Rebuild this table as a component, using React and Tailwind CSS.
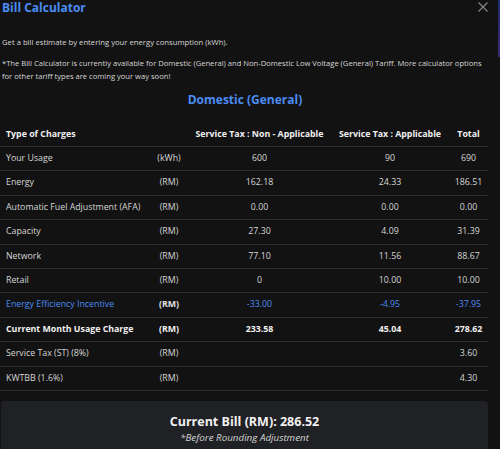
import React from "react";

const rows = [
  { label: "Your Usage", unit: "(kWh)", a: "600", b: "90", t: "690" },
  { label: "Energy", unit: "(RM)", a: "162.18", b: "24.33", t: "186.51" },
  { label: "Automatic Fuel Adjustment (AFA)", unit: "(RM)", a: "0.00", b: "0.00", t: "0.00" },
  { label: "Capacity", unit: "(RM)", a: "27.30", b: "4.09", t: "31.39" },
  { label: "Network", unit: "(RM)", a: "77.10", b: "11.56", t: "88.67" },
  { label: "Retail", unit: "(RM)", a: "0", b: "10.00", t: "10.00" },
  { label: "Energy Efficiency Incentive", unit: "(RM)", a: "-33.00", b: "-4.95", t: "-37.95", kind: "blue" },
  { label: "Current Month Usage Charge", unit: "(RM)", a: "233.58", b: "45.04", t: "278.62", kind: "bold" },
  { label: "Service Tax (ST) (8%)", unit: "(RM)", a: "", b: "", t: "3.60" },
  { label: "KWTBB (1.6%)", unit: "(RM)", a: "", b: "", t: "4.30" },
];

const grid = "grid grid-cols-[150px_38px_143px_118px_39px] items-center";

export default function App() {
  return (
    <div
      className="relative w-[500px] h-[449px] overflow-hidden bg-[#121212] text-[#d6d6d6]"
      style={{ fontFamily: '"Open Sans", "Noto Sans", sans-serif' }}
    >
      <div className="absolute right-0 top-0 w-[2px] h-[57px] bg-gradient-to-b from-[#1e2a6e] to-[#3a2a6e]" />
      <div className="w-[488px] pl-[2px]">
        <div className="flex items-start justify-between h-[30px]">
          <h1 className="text-[12px] font-bold leading-[15px] text-[#4b8cf2]">Bill Calculator</h1>
          <svg width="10" height="10" viewBox="0 0 10 10" className="mt-[2px]" stroke="#8a8a8a" strokeWidth="1.1">
            <path d="M0.5 0.5 L9.5 9.5 M9.5 0.5 L0.5 9.5" />
          </svg>
        </div>
        <p className="text-[7.7px] leading-[13px] mt-[6px]">
          Get a bill estimate by entering your energy consumption (kWh).
        </p>
        <p className="text-[7.6px] leading-[13px] mt-[8px] w-[490px]">
          *The Bill Calculator is currently available for Domestic (General) and Non-Domestic Low Voltage (General) Tariff. More calculator options
          <br />
          for other tariff types are coming your way soon!
        </p>
        <h2 className="text-center text-[12px] font-bold text-[#4b8cf2] mt-[9px] leading-[16px]">
          Domestic (General)
        </h2>
      </div>
      <div className="w-[488px] mt-[16px] text-[8.8px]">
        <div className={`${grid} h-[23px] font-bold text-[#f0f0f0] border-b border-[#2e2e2e]`}>
          <div className="pl-[6px]">Type of Charges</div>
          <div />
          <div className="text-center">Service Tax : Non - Applicable</div>
          <div className="text-center">Service Tax : Applicable</div>
          <div className="text-center">Total</div>
        </div>
        {rows.map((r) => {
          const cls =
            r.kind === "blue"
              ? "text-[#4b8cf2]"
              : r.kind === "bold"
              ? "font-bold text-[#f0f0f0]"
              : "";
          return (
            <div key={r.label} className={`${grid} h-[24.4px] border-b border-[#2e2e2e] ${cls}`}>
              <div className="pl-[6px]">{r.label}</div>
              <div className={`text-center ${r.kind === "blue" ? "font-bold text-[#e0e0e0]" : ""}`}>{r.unit}</div>
              <div className="text-center">{r.a}</div>
              <div className="text-center">{r.b}</div>
              <div className="text-center">{r.t}</div>
            </div>
          );
        })}
      </div>
      <div className="ml-[1px] mt-[10px] w-[487px] h-[60px] rounded-[4px] bg-[#202124] pt-[12px] text-center">
        <div className="text-[12.5px] font-bold leading-[18px] text-[#f2f2f2]">Current Bill (RM): 286.52</div>
        <div className="text-[9.8px] italic leading-[14px] text-[#d6d6d6] mt-[0px]">*Before Rounding Adjustment</div>
      </div>
    </div>
  );
}
